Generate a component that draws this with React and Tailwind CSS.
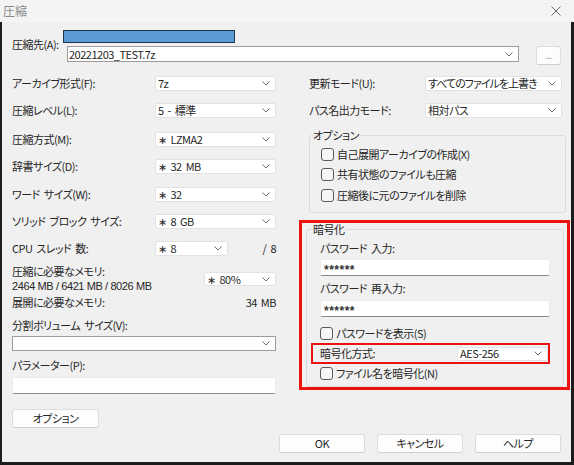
import React from "react";

const Chevron = () => (
  <svg width="8" height="5" viewBox="0 0 8 5" className="shrink-0">
    <polyline points="0.5,0.5 4,4 7.5,0.5" fill="none" stroke="#707070" strokeWidth="1" />
  </svg>
);

const Select = ({ value, className = "", textClass = "" }) => (
  <div
    className={`flex items-center justify-between bg-white border border-[#e2e2e2] rounded-[2px] pl-[2px] pr-[5px] ${className}`}
  >
    <span className={`leading-none whitespace-nowrap ${textClass}`}>{value}</span>
    <Chevron />
  </div>
);

const Combo = ({ value = "", className = "" }) => (
  <div
    className={`flex items-center justify-between bg-white border border-[#9c9c9c] pl-[1px] pr-[5px] ${className}`}
  >
    <span className="leading-none whitespace-nowrap">{value}</span>
    <Chevron />
  </div>
);

const TextBox = ({ value = "", className = "" }) => (
  <div
    className={`flex items-center bg-white border border-[#ececec] border-b-[#8a8a8a] rounded-[2px] pl-[3px] ${className}`}
  >
    <span className="mt-[5px] leading-none tracking-[0.5px] font-['Liberation_Sans',sans-serif] font-bold text-[12px] text-[#333]">
      {value}
    </span>
  </div>
);

const Check = ({ label, className = "" }) => (
  <div className={`flex items-center h-[13px] ${className}`}>
    <div className="w-[13px] h-[13px] rounded-[3px] border border-[#5a5a5a] bg-[#f6f6f6] shrink-0" />
    <span className="ml-[3px] leading-[13px] whitespace-nowrap">{label}</span>
  </div>
);

const Btn = ({ children, className = "" }) => (
  <button
    className={`flex items-center justify-center h-[19px] bg-[#fdfdfd] border border-[#dcdcdc] border-b-[#cfcfcf] rounded-[3px] ${className}`}
  >
    {children}
  </button>
);

const LeftRow = ({ label, value, className = "" }) => (
  <div className={`flex items-center justify-between h-[15px] ${className}`}>
    <span className="leading-[13px] whitespace-nowrap">{label}</span>
    <Select value={value} className="w-[121px] h-[15px]" />
  </div>
);

const RightRow = ({ label, value, className = "", textClass = "" }) => (
  <div className={`flex items-center justify-between h-[15px] pl-[10px] pr-[8px] ${className}`}>
    <span className="leading-[13px] whitespace-nowrap">{label}</span>
    <Select value={value} textClass={textClass} className="w-[137px] h-[15px]" />
  </div>
);

export default function App() {
  return (
    <div className="w-[574px] h-[465px] overflow-hidden font-['Noto_Sans_CJK_JP',sans-serif] [font-feature-settings:'palt'] text-[11px] tracking-[-0.5px] [word-spacing:2px] text-[#262626] select-none">
      {/* title bar */}
      <div className="flex items-center justify-between h-[22px] bg-[#f4f4f4] pl-[3px] pr-[13px]">
        <span className="text-[12px] text-[#8a8a8a] leading-none tracking-normal">圧縮</span>
        <svg width="10" height="10" viewBox="0 0 10 10">
          <line x1="0.5" y1="0.5" x2="9.5" y2="9.5" stroke="#6a6a6a" strokeWidth="1" />
          <line x1="9.5" y1="0.5" x2="0.5" y2="9.5" stroke="#6a6a6a" strokeWidth="1" />
        </svg>
      </div>

      {/* body */}
      <div className="h-[443px] bg-[#f0f0f0] border-l-2 border-r-[3px] border-b-[3px] border-[#1c1c1c] pt-[8px] pl-[10px]">
        {/* destination */}
        <div className="flex items-start">
          <span className="w-[55px] mt-[8px] leading-[13px] whitespace-nowrap">圧縮先(A):</span>
          <div className="flex flex-col">
            <div className="w-[172px] h-[13px] -ml-[4px] bg-[#5b9bd5] border border-[#1f3550]" />
            <Combo value="20221203_TEST.7z" className="mt-[3px] w-[452px] h-[16px]" />
          </div>
          <Btn className="ml-[17px] mt-[16px] w-[25px] h-[18px] text-[9px] text-[#9a9a9a]">...</Btn>
        </div>

        {/* columns */}
        <div className="flex mt-[11px]">
          {/* left */}
          <div className="flex flex-col w-[264px]">
            <LeftRow label="アーカイブ形式(F):" value="7z" />
            <LeftRow label="圧縮レベル(L):" value="5 - 標準" className="mt-[12px]" />
            <LeftRow label="圧縮方式(M):" value="∗ LZMA2" className="mt-[14px]" />
            <LeftRow label="辞書サイズ(D):" value="∗ 32 MB" className="mt-[12px]" />
            <LeftRow label="ワード サイズ(W):" value="∗ 32" className="mt-[13px]" />
            <LeftRow label="ソリッド ブロック サイズ:" value="∗ 8 GB" className="mt-[12px]" />
            <div className="flex items-center h-[15px] mt-[12px]">
              <span className="w-[143px] leading-[13px] whitespace-nowrap">CPU スレッド 数:</span>
              <Select value="∗ 8" className="w-[73px] h-[15px]" />
              <span className="flex-1 text-right leading-[13px]">/ 8</span>
            </div>
            <div className="flex items-start justify-between mt-[9px]">
              <div className="flex flex-col">
                <span className="leading-[13px]">圧縮に必要なメモリ:</span>
                <span className="mt-[2px] leading-[13px] whitespace-nowrap font-['Liberation_Sans',sans-serif] tracking-[-0.4px] [word-spacing:0px]">
                  2464 MB / 6421 MB / 8026 MB
                </span>
              </div>
              <Select value="∗ 80%" className="w-[72px] h-[14px] mt-[7px]" />
            </div>
            <div className="flex justify-between leading-[13px] mt-[3px]">
              <span>展開に必要なメモリ:</span>
              <span>34 MB</span>
            </div>
            <span className="leading-[13px] mt-[10px]">分割ボリューム サイズ(V):</span>
            <Combo className="mt-[4px] w-full h-[15px]" />
            <span className="leading-[13px] mt-[8px]">パラメーター(P):</span>
            <TextBox className="mt-[5px] w-full h-[17px]" />
            <Btn className="mt-[15px] w-[87px]">オプション</Btn>
          </div>

          {/* right */}
          <div className="flex flex-col ml-[23px] w-[271px]">
            <RightRow label="更新モード(U):" value="すべてのファイルを上書き" textClass="tracking-[-1px]" />
            <RightRow label="パス名出力モード:" value="相対パス" className="mt-[12px]" />

            <fieldset className="mt-[11px] ml-[10px] mr-[4px] border border-[#dcdcdc] rounded-[3px] pb-[10px]">
              <legend className="ml-[3px] px-0 leading-[13px]">オプション</legend>
              <div className="flex flex-col pl-[11px]">
                <Check label="自己展開アーカイブの作成(X)" className="mt-[6px]" />
                <Check label="共有状態のファイルも圧縮" className="mt-[7px]" />
                <Check label="圧縮後に元のファイルを削除" className="mt-[8px]" />
              </div>
            </fieldset>

            <div className="mt-[7px] border-[3px] border-[#ee1111]">
              <fieldset className="ml-[4px] mr-[3px] border border-[#dcdcdc] rounded-[3px] pb-[6px]">
                <legend className="ml-[6px] px-0 leading-[13px]">暗号化</legend>
                <div className="flex flex-col pl-[13px]">
                  <span className="leading-[13px] mt-[6px]">パスワード 入力:</span>
                  <TextBox value="******" className="mt-[4px] w-[230px] h-[17px]" />
                  <span className="leading-[13px] mt-[6px]">パスワード 再入力:</span>
                  <TextBox value="******" className="mt-[5px] w-[230px] h-[17px]" />
                  <Check label="パスワードを表示(S)" className="mt-[10px]" />
                  <div className="flex items-center justify-between mt-[3px] -ml-[9px] w-[239px] h-[21px] border-2 border-[#ee1111] pl-[7px]">
                    <span className="leading-[13px]">暗号化方式:</span>
                    <Select value="AES-256" className="w-[91px] h-[14px] bg-[#fafafa]" />
                  </div>
                  <Check label="ファイル名を暗号化(N)" className="mt-[3px]" />
                </div>
              </fieldset>
            </div>
          </div>
        </div>

        {/* bottom buttons */}
        <div className="flex justify-end gap-3 mt-[6px] pr-[10px]">
          <Btn className="w-[86px]">OK</Btn>
          <Btn className="w-[86px]">キャンセル</Btn>
          <Btn className="w-[86px]">ヘルプ</Btn>
        </div>
      </div>
    </div>
  );
}
